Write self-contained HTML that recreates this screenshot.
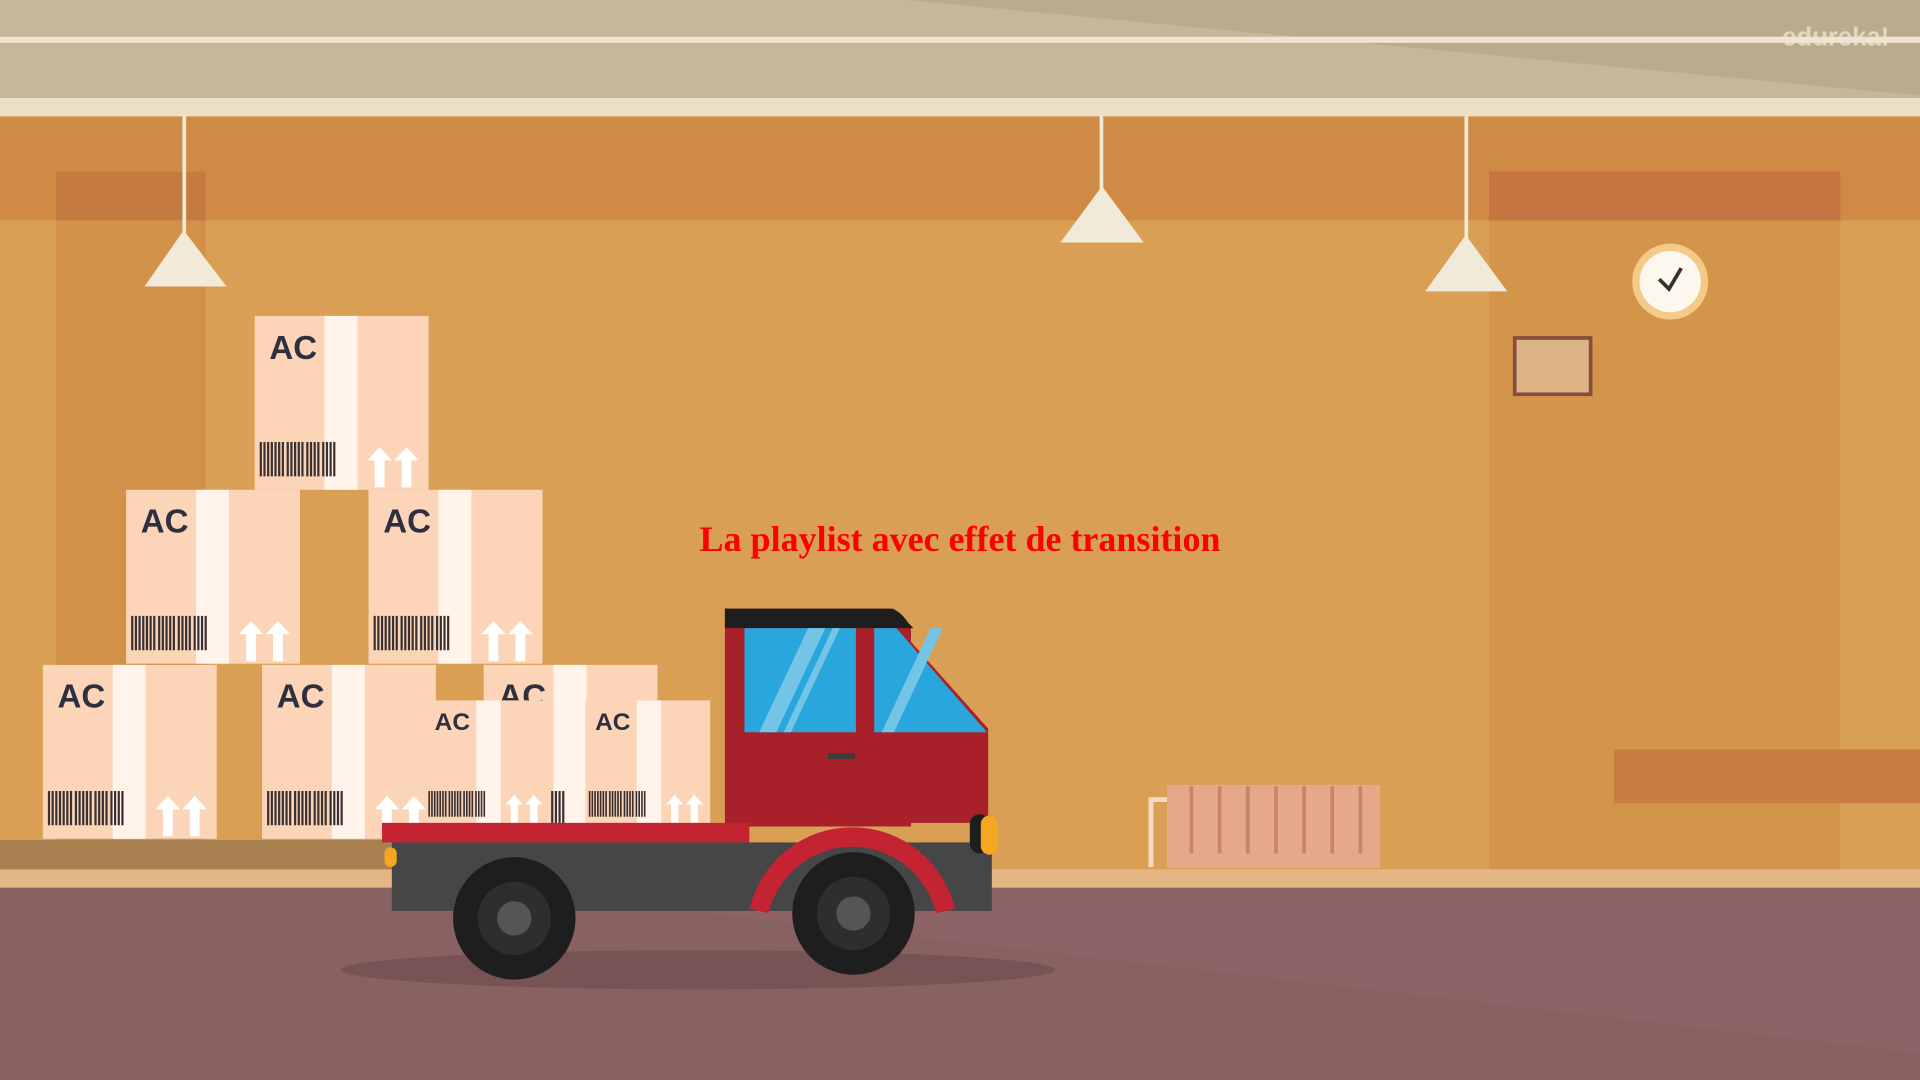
<!DOCTYPE html>
<html><head><meta charset="utf-8"><style>html,body{margin:0;padding:0;overflow:hidden;background:#d9a055}svg{display:block}</style></head><body>
<svg width="1920" height="1080" viewBox="0 0 1568 882" xmlns="http://www.w3.org/2000/svg">
<defs>
<g id="bc">
<path d="M2 0v28M5 0v28M8 0v28M11 0v28M14 0v28M17 0v28M20 0v28M24 0v28M27 0v28M30 0v28M33 0v28M36 0v28M40 0v28M43 0v28M46 0v28M49 0v28M53 0v28M56 0v28M59 0v28M62 0v28" stroke="#3a3030" stroke-width="1.8"/></g>
<g id="box">
<rect width="142" height="142" fill="#fcd4b7"/>
<rect x="57" width="27" height="142" fill="#fff3ea"/>
<text x="12" y="35" font-family="Liberation Sans, sans-serif" font-weight="bold" font-size="27" fill="#2e3040">AC</text>
<use href="#bc" x="3" y="103"/>
<path d="M98 140v-22h-6l10-11 10 11h-6v22zM120 140v-22h-6l10-11 10 11h-6v22z" fill="#fff"/>
</g>
<g id="sbox">
<rect width="102" height="102" fill="#fcd4b7"/>
<rect x="42" width="20" height="102" fill="#fff3ea"/>
<text x="8" y="24" font-family="Liberation Sans, sans-serif" font-weight="bold" font-size="20" fill="#2e3040">AC</text>
<g transform="translate(2,74) scale(0.75)"><use href="#bc"/></g>
<path d="M70 100v-15h-4l7-8 7 8h-4v15zM86 100v-15h-4l7-8 7 8h-4v15z" fill="#fff"/>
</g>
</defs>
<rect width="1568" height="882" fill="#d9a055"/>
<rect y="95" width="1568" height="85" fill="#cf8b46"/>
<rect x="46" y="140" width="122" height="570" fill="#d19149"/>
<rect x="46" y="140" width="122" height="40" fill="#c57a40"/>
<rect x="1216" y="140" width="287" height="570" fill="#d39549"/>
<rect x="1216" y="140" width="287" height="40" fill="#c57442"/>
<rect x="1318" y="612" width="250" height="44" fill="#c97d42"/>
<rect width="1568" height="95" fill="#c7b699"/>
<polygon points="740,0 1568,0 1568,78" fill="#bcaa8c"/>
<rect y="30" width="1568" height="5" fill="#efe5cf"/>
<rect y="80" width="1568" height="15" fill="#ebe0c5"/>
<text x="1543" y="37" text-anchor="end" font-family="Liberation Sans, sans-serif" font-weight="bold" font-size="21" fill="#efe6d6" opacity="0.75">edureka!</text>
<g fill="#f1ead8"><rect x="149" y="95" width="3" height="100"/><polygon points="150,188 118,234 185,234"/>
<rect x="898" y="95" width="3" height="60"/><polygon points="900,152 866,198 934,198"/>
<rect x="1196" y="95" width="3" height="100"/><polygon points="1197,192 1164,238 1231,238"/></g>
<circle cx="1364" cy="230" r="31" fill="#f5c987"/><circle cx="1364" cy="230" r="25" fill="#fdf8ee"/>
<path d="M1355 228l8 8 10-17" stroke="#3a3030" stroke-width="3" fill="none"/>
<rect x="1237" y="276" width="62" height="46" fill="#dcb486" stroke="#8a4c3c" stroke-width="3"/>
<rect y="710" width="1568" height="15" fill="#e3b683"/>
<rect y="725" width="1568" height="157" fill="#8d6465"/>
<polygon points="0,725 400,725 1568,860 1568,882 0,882" fill="#86605f" opacity="0.6"/>
<rect y="686" width="330" height="24" fill="#a9804f"/>
<path d="M940 708v-55h15" stroke="#f3dcc0" stroke-width="4" fill="none"/>
<rect x="953" y="641" width="174" height="68" fill="#e5a98a"/>
<path d="M973 642v55M996 642v55M1019 642v55M1042 642v55M1065 642v55M1088 642v55M1111 642v55" stroke="#c98366" stroke-width="3"/>
<use href="#box" x="208" y="258"/>
<use href="#box" x="103" y="400"/>
<use href="#box" x="301" y="400"/>
<use href="#box" x="35" y="543"/>
<use href="#box" x="214" y="543"/>
<use href="#box" x="395" y="543"/>
<use href="#sbox" x="347" y="572"/>
<use href="#sbox" x="478" y="572"/>
<ellipse cx="570" cy="792" rx="292" ry="16" fill="#775353"/>
<path d="M592 497h138l14 14v164h-152z" fill="#a8202a"/>
<path d="M592 497h134q8 0 16 12l4 4h-154z" fill="#1e1e1e"/>
<path d="M712 513h22l73 82v77h-95z" fill="#a8202a"/>
<rect x="608" y="513" width="91" height="85" fill="#29a6dc"/>
<path d="M714 513h18l74 85h-92z" fill="#29a6dc"/>
<path d="M620 598l40-85h14l-40 85zM640 598l40-85h6l-40 85zM720 598l40-85h10l-40 85z" fill="#74c4e8"/>
<rect x="676" y="615" width="22" height="5" fill="#3c3c3c"/>
<rect x="312" y="672" width="300" height="16" fill="#c42431"/>
<rect x="320" y="688" width="490" height="56" fill="#464646"/>
<rect x="792" y="665" width="16" height="32" rx="8" fill="#1e1e1e"/>
<rect x="801" y="666" width="14" height="32" rx="7" fill="#f5a623"/>
<rect x="314" y="692" width="10" height="16" rx="5" fill="#f5a623"/>
<path d="M620 744a78 78 0 0 1 152 0" stroke="#c42431" stroke-width="16" fill="none"/>
<circle cx="697" cy="746" r="50" fill="#1e1e1e"/><circle cx="697" cy="746" r="30" fill="#2e2e2e"/><circle cx="697" cy="746" r="14" fill="#555"/>
<circle cx="420" cy="750" r="50" fill="#1e1e1e"/><circle cx="420" cy="750" r="30" fill="#2e2e2e"/><circle cx="420" cy="750" r="14" fill="#555"/>
<text x="784" y="450" text-anchor="middle" font-family="Liberation Serif, serif" font-weight="bold" font-size="29.4" fill="#ff0000">La playlist avec effet de transition</text>
</svg>
</body></html>
